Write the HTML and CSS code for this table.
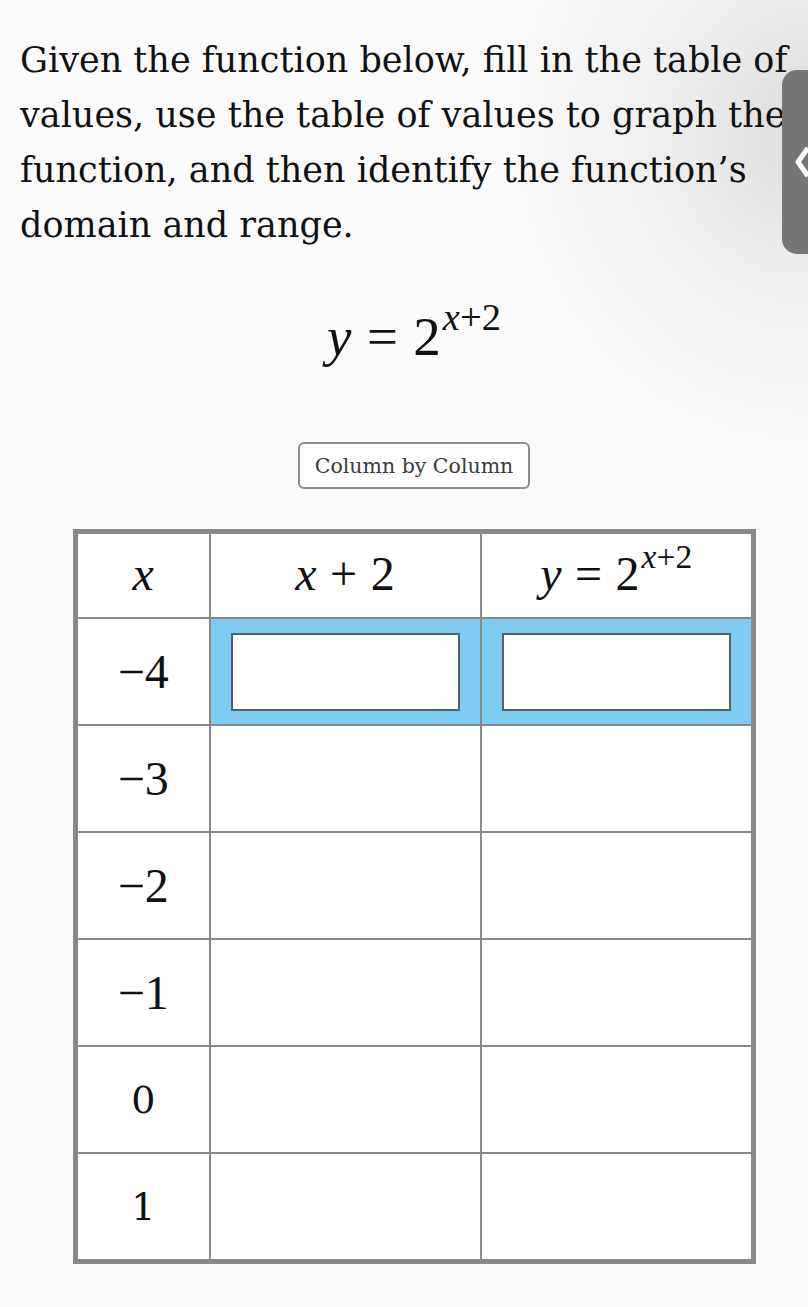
FILE: index.html
```html
<!DOCTYPE html>
<html>
<head>
<meta charset="utf-8">
<link rel="stylesheet" href="styles.css">
</head>
<body>
<div class="page">
  <p class="prompt">Given the function below, fill in the table of values, use the table of values to graph the function, and then identify the function’s domain and range.</p>
  <div class="formula"><span class="mi">y</span><span class="mo">=</span><span class="mn">2</span><sup class="sup"><span class="mi">x</span>+2</sup></div>
  <div class="btn-row"><button class="btn">Column by Column</button></div>
  <table class="values">
    <colgroup><col class="c1"><col class="c2"><col class="c3"></colgroup>
    <thead>
      <tr class="head">
        <th><span class="mi">x</span></th>
        <th><span class="mi">x</span><span class="mo">+</span><span class="mn">2</span></th>
        <th><span class="mi">y</span><span class="mo">=</span><span class="mn">2</span><sup class="sup"><span class="mi">x</span>+2</sup></th>
      </tr>
    </thead>
    <tbody>
      <tr class="active">
        <td class="xv"><span class="mn">−4</span></td>
        <td class="cell"><div class="inp"></div></td>
        <td class="cell"><div class="inp"></div></td>
      </tr>
      <tr><td class="xv"><span class="mn">−3</span></td><td></td><td></td></tr>
      <tr><td class="xv"><span class="mn">−2</span></td><td></td><td></td></tr>
      <tr><td class="xv"><span class="mn">−1</span></td><td></td><td></td></tr>
      <tr><td class="xv plain">0</td><td></td><td></td></tr>
      <tr><td class="xv plain">1</td><td></td><td></td></tr>
    </tbody>
  </table>
</div>
<div class="side-tab"><svg width="16" height="34" viewBox="0 0 16 34"><path d="M14 3 L4 17 L14 31" fill="none" stroke="#fff" stroke-width="5" stroke-linejoin="round"/></svg></div>
</body>
</html>
```

FILE: styles.css
```css
html, body {
  margin: 0;
  padding: 0;
}
body {
  width: 808px;
  height: 1307px;
  overflow: hidden;
  position: relative;
  background: radial-gradient(ellipse 300px 320px at 808px 130px, #dcdcdc 0%, #ececec 40%, #fbfbfb 100%);
  background-color: #fbfbfb;
  font-family: "DejaVu Serif", "Liberation Serif", serif;
  color: #111;
}
.page {
  padding: 0 0 0 20px;
}
.prompt {
  margin: 0;
  width: 798px;
  padding-top: 33px;
  font-size: 35px;
  line-height: 55px;
}
.formula {
  text-align: center;
  margin-top: 54px;
  font-family: "Liberation Serif", serif;
  font-size: 55px;
  line-height: 60px;
  height: 60px;
}
.mi {
  font-style: italic;
  font-family: "Liberation Serif", serif;
}
.mo {
  margin: 0 0.28em;
}
.mn {
  font-family: "Liberation Serif", serif;
}
.sup {
  font-size: 0.7em;
  vertical-align: 0.66em;
  line-height: 0;
  margin-left: 2px;
}
.btn-row {
  display: flex;
  justify-content: center;
  margin-top: 75px;
}
.btn {
  width: 232px;
  height: 47px;
  border: 2px solid #8a8a8a;
  border-radius: 6px;
  background: #fff;
  font-family: "DejaVu Serif", serif;
  font-size: 20.5px;
  color: #3a3a3a;
  padding: 0;
}
.values {
  margin: 40px 0 0 53px;
  border-collapse: collapse;
  border: 5px solid #888;
  background: #fff;
  font-family: "Liberation Serif", serif;
  font-size: 48px;
  table-layout: fixed;
  width: 678px;
}
.c1 { width: 134px; }
.c2 { width: 271px; }
.c3 { width: 273px; }
.values th, .values td {
  border: 2px solid #888;
  text-align: center;
  padding: 0;
  font-weight: normal;
}
.head th {
  height: 79px;
  vertical-align: middle;
  padding-bottom: 4px;
}
.values tbody td {
  height: 105px;
}
.xv {
  padding-bottom: 6px;
}
.plain {
  font-family: "DejaVu Serif", serif;
  font-size: 38px;
}
.active td.cell {
  background: #80cbf0;
  padding: 0 20px;
}
.inp {
  height: 78px;
  background: #fff;
  border: 2px solid #56606a;
  box-sizing: border-box;
}
.side-tab {
  position: absolute;
  left: 782px;
  top: 70px;
  width: 40px;
  height: 184px;
  background: #767676;
  border-radius: 15px;
  display: flex;
  align-items: center;
  padding-left: 12px;
  box-sizing: border-box;
}
```
